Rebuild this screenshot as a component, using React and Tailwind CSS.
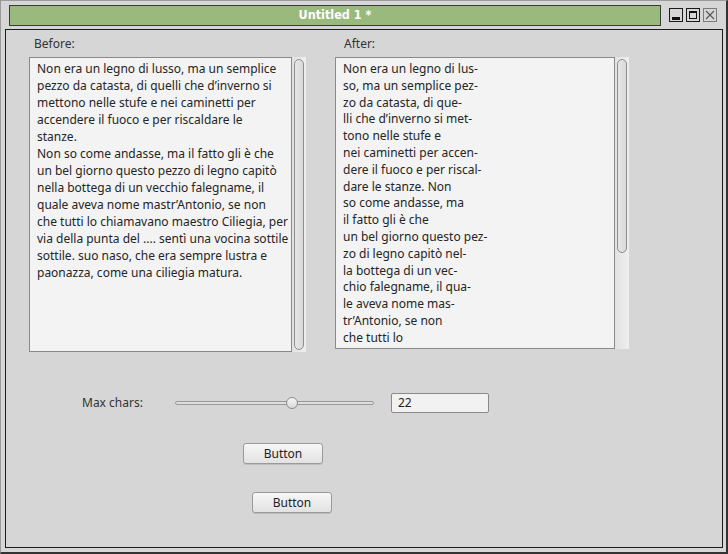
import React from "react";

const leftLines = [
  "Non era un legno di lusso, ma un semplice",
  "pezzo da catasta, di quelli che d’inverno si",
  "mettono nelle stufe e nei caminetti per",
  "accendere il fuoco e per riscaldare le",
  "stanze.",
  "Non so come andasse, ma il fatto gli è che",
  "un bel giorno questo pezzo di legno capitò",
  "nella bottega di un vecchio falegname, il",
  "quale aveva nome mastr’Antonio, se non",
  "che tutti lo chiamavano maestro Ciliegia, per",
  "via della punta del .... sentì una vocina sottile",
  "sottile. suo naso, che era sempre lustra e",
  "paonazza, come una ciliegia matura.",
];

const rightLines = [
  "Non era un legno di lus-",
  "so, ma un semplice pez-",
  "zo da catasta, di que-",
  "lli che d’inverno si met-",
  "tono nelle stufe e",
  "nei caminetti per accen-",
  "dere il fuoco e per riscal-",
  "dare le stanze. Non",
  "so come andasse, ma",
  "il fatto gli è che",
  "un bel giorno questo pez-",
  "zo di legno capitò nel-",
  "la bottega di un vec-",
  "chio falegname, il qua-",
  "le aveva nome mas-",
  "tr’Antonio, se non",
  "che tutti lo",
];

function Scrollbar({ thumbH }) {
  return (
    <div className="w-[14px] h-full bg-gradient-to-r from-[#e2e2e2] to-[#efefef] pt-[2px] px-[2px]">
      <div
        className={`w-[10px] ${thumbH} rounded-[5px] border border-[#8e8e8e] bg-gradient-to-r from-[#e6e6e6] to-[#d9d9d9]`}
      />
    </div>
  );
}

function WinBtn({ children, light }) {
  return (
    <div
      className={`w-[14px] h-[14px] border ${light ? "border-[#7a7a7a]" : "border-[#1a1a1a]"} flex items-center justify-center`}
    >
      {children}
    </div>
  );
}

export default function App() {
  return (
    <div
      className="w-[728px] h-[554px] bg-[#d6d6d6] border-l border-t border-[#9a9a9a] border-r-2 border-b-2 border-r-[#333] border-b-[#333] text-[#2a2a2a] flex flex-col"
      style={{ fontFamily: '"Noto Sans", "Open Sans", sans-serif' }}
    >
      {/* title row */}
      <div className="flex items-start mt-[4px] h-[21px]">
        <div className="ml-[8px] w-[652px] h-[21px] bg-[#9aba7d] border border-[#3a3a3a] flex items-center justify-center">
          <span
            className="text-white font-bold text-[12.5px] leading-none"
            style={{ fontFamily: '"DejaVu Sans Condensed", "DejaVu Sans", sans-serif' }}
          >
            Untitled 1 *
          </span>
        </div>
        <div className="flex gap-[3px] ml-[8px] mt-[3px]">
          <WinBtn>
            <div className="w-[8px] h-[3px] bg-[#111] mt-[6px]" />
          </WinBtn>
          <WinBtn>
            <div className="w-[8px] h-[8px] border border-[#111] border-t-2" />
          </WinBtn>
          <WinBtn light>
            <svg width="10" height="10" viewBox="0 0 10 10">
              <path d="M1 1 L9 9 M9 1 L1 9" stroke="#555" strokeWidth="1.1" />
            </svg>
          </WinBtn>
        </div>
      </div>

      {/* inner frame */}
      <div className="ml-[4px] mt-[3px] w-[718px] h-[519px] border border-[#1c1c1c] flex flex-col text-[12px]">
        {/* text areas row */}
        <div className="flex items-start">
          <div className="ml-[23px] flex flex-col">
            <div className="h-[27px] flex items-center pl-[5px] text-[#333]">Before:</div>
            <div className="flex h-[295px]">
              <div className="w-[263px] h-full border border-[#8a8a8a] bg-[#f3f3f3] pl-[7px] pt-[2px] leading-[17px] text-[#252525] overflow-hidden">
                {leftLines.map((l, i) => (
                  <div key={i} className="whitespace-nowrap">
                    {l}
                  </div>
                ))}
              </div>
              <Scrollbar thumbH="h-[291px]" />
            </div>
          </div>
          <div className="ml-[29px] flex flex-col">
            <div className="h-[27px] flex items-center pl-[9px] text-[#333]">After:</div>
            <div className="flex h-[292px]">
              <div className="w-[280px] h-full border border-[#8a8a8a] bg-[#f3f3f3] pl-[7px] pt-[3px] leading-[16.8px] text-[#252525] overflow-hidden">
                {rightLines.map((l, i) => (
                  <div key={i} className="whitespace-nowrap">
                    {l}
                  </div>
                ))}
              </div>
              <Scrollbar thumbH="h-[194px]" />
            </div>
          </div>
        </div>

        {/* slider row */}
        <div className="flex items-center mt-[41px] h-[20px] ml-[76px]">
          <div className="w-[93px] text-[#333]">Max chars:</div>
          <div className="relative w-[199px] h-[12px] flex items-center">
            <div className="w-full h-[4px] rounded-full border border-[#9a9a9a] bg-[#dedede]" />
            <div className="absolute left-[111px] top-0 w-[12px] h-[12px] rounded-full border border-[#8c8c8c] bg-gradient-to-b from-[#f6f6f6] to-[#dadada]" />
          </div>
          <div className="ml-[17px] w-[98px] h-[20px] border border-[#8a8a8a] rounded-[2px] bg-[#f2f2f2] flex items-center pl-[6px] text-[#222]">
            22
          </div>
        </div>

        {/* buttons */}
        <div className="mt-[30px] ml-[237px] w-[80px] h-[21px] border border-[#9a9a9a] rounded-[3px] bg-gradient-to-b from-[#f7f7f7] to-[#e2e2e2] shadow-[0_1px_0_#bdbdbd] flex items-center justify-center text-[#222]">
          Button
        </div>
        <div className="mt-[28px] ml-[246px] w-[80px] h-[21px] border border-[#9a9a9a] rounded-[3px] bg-gradient-to-b from-[#f7f7f7] to-[#e2e2e2] shadow-[0_1px_0_#bdbdbd] flex items-center justify-center text-[#222]">
          Button
        </div>
      </div>
    </div>
  );
}
